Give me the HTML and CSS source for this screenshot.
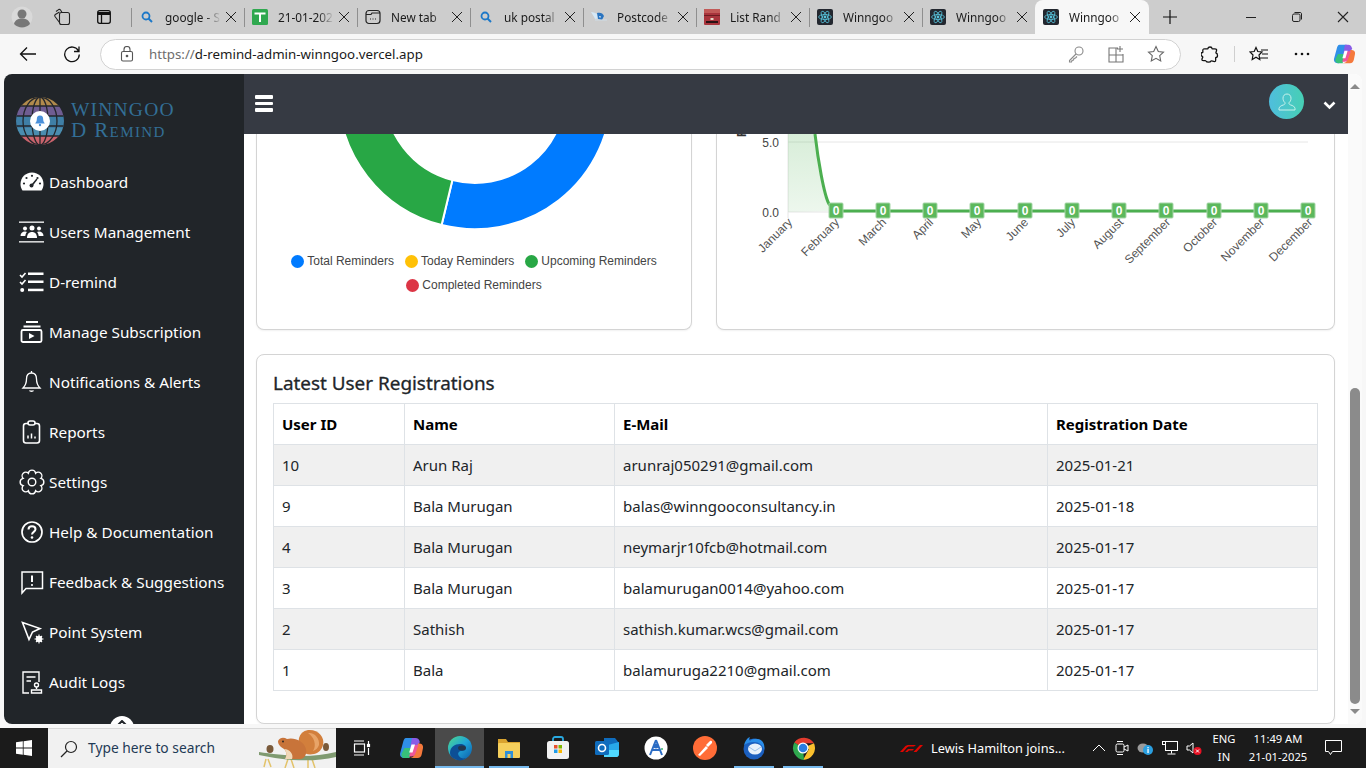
FILE: index.html
```html
<!DOCTYPE html>
<html lang="en">
<head>
    <meta charset="UTF-8">
    <meta name="viewport" content="width=device-width, initial-scale=1.0">
    <title>Winngoo D Remind</title>
    <link rel="stylesheet" href="styles.css">
</head>
<body>

    <!-- shared favicons -->
    <svg class="defs" width="0" height="0">
        <defs>
            <symbol id="fav-search" viewBox="0 0 16 16">
                <circle cx="7" cy="7" r="3.500" fill="none" stroke="#1c78c8" stroke-width="1.800"/>
                <path d="M9.500 9.500l3.500 3.500" stroke="#1c78c8" stroke-width="2"/>
            </symbol>
            <symbol id="fav-react" viewBox="0 0 16 16">
                <rect width="16" height="16" rx="2" fill="#23272f"/>
                <circle cx="8" cy="8" r="1.400" fill="#58c4dc"/>
                <g fill="none" stroke="#58c4dc" stroke-width=".8">
                    <ellipse cx="8" cy="8" rx="6.400" ry="2.500"/>
                    <ellipse cx="8" cy="8" rx="6.400" ry="2.500" transform="rotate(60 8 8)"/>
                    <ellipse cx="8" cy="8" rx="6.400" ry="2.500" transform="rotate(120 8 8)"/>
                </g>
            </symbol>
            <symbol id="copilot" viewBox="0 0 24 24">
                <path d="M7 2h8L11 17c-.6 2.500-2 5-5 5H5C2 22 .5 19.500 1.200 17L4 6.500C4.600 4 5.500 2 7 2z" fill="#2f8fe8"/>
                <path d="M13 2h3.500c2.500 0 3.800 1.500 4.300 4L18 13h-7z" fill="#8a5ce6"/>
                <path d="M10 22h8.500c2.500 0 3.800-1.500 4.300-4L24 12c.4-2.500-1-4.500-3.500-4.500H19L15 19c-.6 1.800-2 3-5 3z" fill="#f5793c"/>
                <path d="M5.500 12H13l-2.500 10H6c-3 0-4-2-3.300-4.500z" fill="#37c07a"/>
                <path d="M14 9h5.500l-3.300 9c-.6 1.500-1.800 2.500-3.500 2.500H10z" fill="#f0569a"/>
                <path d="M12.500 8.500H16l-2.500 8h-3.300z" fill="#fff"/>
            </symbol>
        </defs>
    </svg>

    <!-- Tab strip -->
    <div class="tabstrip">
        <div class="strip-left">
            <span class="profile">
                <svg width="22" height="22" viewBox="0 0 22 22">
                    <circle cx="11" cy="11" r="10.500" fill="#d9d9d9"/>
                    <circle cx="11" cy="8" r="4.500" fill="#777"/>
                    <path d="M3 18c1-4 4-5.500 8-5.500s7 1.500 8 5.500c-4 4.500-12 4.500-16 0z" fill="#777"/>
                </svg>
            </span>
            <span class="strip-btn">
                <svg width="18" height="18" viewBox="0 0 18 18" fill="none" stroke="#222" stroke-width="1.100">
                    <rect x="6.500" y="4.500" width="10" height="12" rx="2"/>
                    <path d="M6.500 14.500L2 8.500c-.5-.8-.4-1.500.3-2L6.500 4M9 4.500L7.500 2c-.5-.7-1.200-.8-1.900-.4L3 3.500"/>
                </svg>
            </span>
            <span class="strip-btn strip-btn-narrow">
                <svg width="16" height="16" viewBox="0 0 16 16" fill="none" stroke="#111" stroke-width="1.300">
                    <rect x="1.700" y="1.700" width="12.600" height="12.600" rx="2"/>
                    <path d="M2 4.500h12" stroke-width="3"/>
                    <path d="M5.500 4.500v9.500"/>
                </svg>
            </span>
        </div>

        <div class="tab">
            <svg class="fav" viewBox="0 0 16 16"><use href="#fav-search"/></svg>
            <span class="tab-title">google - S</span>
            <span class="tab-x"></span>
        </div>
        <div class="tab">
            <svg class="fav" viewBox="0 0 16 16">
                <rect width="16" height="16" rx="1.500" fill="#2fa84f"/>
                <path d="M2.500 4.500h11M8 4.500V13" stroke="#fff" stroke-width="2"/>
            </svg>
            <span class="tab-title">21-01-202</span>
            <span class="tab-x"></span>
        </div>
        <div class="tab">
            <svg class="fav" viewBox="0 0 16 16" fill="none" stroke="#222" stroke-width="1.200">
                <rect x="1" y="1.500" width="14" height="13" rx="3"/>
                <path d="M1 5.500h5l1-1.500h8M5 10h1M7.500 10h1M10 10h1"/>
            </svg>
            <span class="tab-title">New tab</span>
            <span class="tab-x"></span>
        </div>
        <div class="tab">
            <svg class="fav" viewBox="0 0 16 16"><use href="#fav-search"/></svg>
            <span class="tab-title">uk postal</span>
            <span class="tab-x"></span>
        </div>
        <div class="tab">
            <svg class="fav" viewBox="0 0 16 16">
                <path d="M0 3c4 0 7 2 9 6l-5 1C3 7 1 5 0 3z" fill="#d6e8f6"/>
                <path d="M6 4c3-1 6 0 7 3l-2 4-4-1z" fill="#2a74c0"/>
                <path d="M8 7l2 .5-1 1.500z" fill="#fff"/>
                <path d="M4 11h12" stroke="#d0dde8" stroke-width="1"/>
            </svg>
            <span class="tab-title">Postcode</span>
            <span class="tab-x"></span>
        </div>
        <div class="tab">
            <svg class="fav" viewBox="0 0 16 16">
                <rect width="16" height="16" rx="1" fill="#a8343c"/>
                <rect width="16" height="4" fill="#c25a58"/>
                <rect y="6" width="16" height="1" fill="#6e1d22"/>
                <rect x="2" y="12" width="12" height="2" fill="#2a1214"/>
                <rect x="6.500" y="9" width="3" height="2" fill="#e8d8c8"/>
            </svg>
            <span class="tab-title">List Rand</span>
            <span class="tab-x"></span>
        </div>
        <div class="tab">
            <svg class="fav" viewBox="0 0 16 16"><use href="#fav-react"/></svg>
            <span class="tab-title">Winngoo</span>
            <span class="tab-x"></span>
        </div>
        <div class="tab">
            <svg class="fav" viewBox="0 0 16 16"><use href="#fav-react"/></svg>
            <span class="tab-title">Winngoo</span>
            <span class="tab-x"></span>
        </div>
        <div class="tab tab-active">
            <svg class="fav" viewBox="0 0 16 16"><use href="#fav-react"/></svg>
            <span class="tab-title">Winngoo</span>
            <span class="tab-x"></span>
        </div>

        <span class="new-tab">
            <svg width="16" height="16" viewBox="0 0 16 16"><path d="M8 1v14M1 8h14" stroke="#111" stroke-width="1.200"/></svg>
        </span>

        <div class="window-btns">
            <span class="win-btn"><svg width="12" height="12" viewBox="0 0 12 12"><path d="M1 6.500h10" stroke="#222"/></svg></span>
            <span class="win-btn"><svg width="12" height="12" viewBox="0 0 12 12" fill="none" stroke="#222"><rect x="1.500" y="3" width="7.500" height="7.500" rx="1.500"/><path d="M3.500 1.500h5.500c1 0 1.500.5 1.500 1.500v5.500"/></svg></span>
            <span class="win-btn"><svg width="12" height="12" viewBox="0 0 12 12"><path d="M1 1l10 10M11 1L1 11" stroke="#222" stroke-width="1.100"/></svg></span>
        </div>
    </div>

    <!-- Address bar -->
    <div class="toolbar">
        <span class="tool-btn tool-back">
            <svg width="18" height="18" viewBox="0 0 18 18" fill="none" stroke="#111" stroke-width="1.300"><path d="M17 9H1.500M8 2.500L1.500 9 8 15.500"/></svg>
        </span>
        <span class="tool-btn tool-reload">
            <svg width="18" height="18" viewBox="0 0 18 18" fill="none" stroke="#111" stroke-width="1.300"><path d="M15.500 6A7.300 7.300 0 1 0 16.300 9.500M16 1.500V6.500H11"/></svg>
        </span>
        <div class="address">
            <svg class="lock" width="14" height="16" viewBox="0 0 14 16" fill="none" stroke="#555" stroke-width="1.100">
                <rect x="1.500" y="5.500" width="11" height="9.500" rx="1.500"/>
                <path d="M4 5.500V3.500a3 3 0 0 1 6 0v2"/>
                <circle cx="7" cy="10" r=".8" fill="#555"/>
            </svg>
            <span class="url"><span class="url-scheme">https://</span>d-remind-admin-winngoo.vercel.app</span>
            <span class="address-icons">
                <svg width="18" height="18" viewBox="0 0 18 18" fill="none" stroke="#8a8a8a" stroke-width="1.100"><circle cx="12" cy="6" r="4"/><path d="M9 9l-6.500 6.500v1.500h2l.5-1.500 1.500-.5.500-1.500 1.500-.5 1.500-1.500"/></svg>
                <svg width="18" height="18" viewBox="0 0 18 18" fill="none" stroke="#777" stroke-width="1.100"><path d="M11 3H2v14h14V9M2 10h14M9 3v14M13 1v6M10 4h6"/></svg>
                <svg width="18" height="18" viewBox="0 0 18 18" fill="none" stroke="#666" stroke-width="1.100"><path d="M9 1.500l2.300 5 5.200.6-3.800 3.600 1 5.300L9 13.300 4.300 16l1-5.300L1.500 7.100l5.200-.6z"/></svg>
            </span>
        </div>
        <span class="tool-btn tool-ext">
            <svg width="18" height="18" viewBox="0 0 18 18" fill="none" stroke="#111" stroke-width="1.300"><path d="M7 3.500C7 1.500 11 1.500 11 3.500c0 1 4-.5 4.500 1s-1 3-.5 3.500c2 .5 2 4.500 0 4.500-1 0 .5 3.500-1 4s-3-1-4-.5C9.500 17.500 5.500 17.500 5 16c-.2-1-3.500.5-4-1s1.500-3 .5-3.500C-.5 11-.5 7.500 1.500 7.500c1 0-.5-3 1-3.500S7 4.500 7 3.500z"/></svg>
        </span>
        <span class="tool-sep"></span>
        <span class="tool-btn tool-fav">
            <svg width="20" height="18" viewBox="0 0 20 18" fill="none" stroke="#111" stroke-width="1.200"><path d="M7 2.500l1.800 4 4.200.5-3 3 .8 4.500L7 12.300 3.200 14.500 4 10 1 7l4.200-.5zM12 5h7M13 9h6M11 13h8"/></svg>
        </span>
        <span class="tool-btn tool-more">
            <svg width="16" height="4" viewBox="0 0 16 4" fill="#111"><circle cx="2" cy="2" r="1.300"/><circle cx="8" cy="2" r="1.300"/><circle cx="14" cy="2" r="1.300"/></svg>
        </span>
        <span class="tool-btn tool-copilot">
            <svg width="22" height="22" viewBox="0 0 24 24"><use href="#copilot"/></svg>
        </span>
    </div>

    <!-- Page -->
    <div class="viewport">
        <aside class="sidebar">
            <div class="brand">
                <svg width="50" height="50" viewBox="0 0 50 50">
                    <clipPath id="globe"><circle cx="25" cy="25" r="24"/></clipPath>
                    <g clip-path="url(#globe)">
                        <rect width="50" height="10" fill="#b08a4c"/>
                        <rect y="10" width="50" height="10" fill="#6f5d92"/>
                        <rect y="20" width="50" height="12" fill="#3f7fa6"/>
                        <rect y="32" width="50" height="8" fill="#4a8daf"/>
                        <rect y="40" width="50" height="10" fill="#c9636c"/>
                        <g stroke="#24272c" stroke-width="1.300" fill="none">
                            <path d="M0 10h50M0 20h50M0 30h50M0 40h50"/>
                            <ellipse cx="25" cy="25" rx="8" ry="24"/>
                            <ellipse cx="25" cy="25" rx="17" ry="24"/>
                            <path d="M25 0v50"/>
                        </g>
                    </g>
                    <circle cx="25" cy="25" r="10" fill="#fff"/>
                    <g transform="translate(25 25) scale(.8) translate(-25 -25)">
                        <path d="M25 18c-3 0-4 2-4 5 0 3-1.500 4-2 5h12c-.5-1-2-2-2-5 0-3-1-5-4-5z" fill="#4a90d9"/>
                        <circle cx="25" cy="30" r="1.500" fill="#4a90d9"/>
                    </g>
                </svg>
                <div class="brand-text">
                    <span class="brand-top">WINNGOO</span>
                    <span class="brand-sub">D Remind</span>
                </div>
            </div>

            <nav class="nav">
                <a class="nav-item">
                    <svg viewBox="0 0 26 26" fill="#fff"><path d="M13 3.500C6.500 3.500 1.500 8.500 1.500 15c0 2.500.7 4.500 2 6.500h19c1.300-2 2-4 2-6.500C24.500 8.500 19.500 3.500 13 3.500z"/><g fill="#212529"><circle cx="13" cy="6.800" r="1.100"/><circle cx="7.500" cy="9" r="1.100"/><circle cx="18.500" cy="9" r="1.100"/><circle cx="5" cy="14.500" r="1.100"/><circle cx="21" cy="14.500" r="1.100"/><circle cx="12.500" cy="16.500" r="2"/></g><path d="M12 16l5.500-6.500 1 1L13.500 17z" fill="#212529"/></svg>
                    <span>Dashboard</span>
                </a>
                <a class="nav-item">
                    <svg viewBox="0 0 26 26" fill="#fff"><rect y="2.500" width="25" height="1.300"/><rect y="22.200" width="25" height="1.300"/><circle cx="13" cy="9" r="2.500"/><circle cx="6" cy="9.500" r="2"/><circle cx="20" cy="9.500" r="2"/><path d="M8 19c0-4 2-6 5-6s5 2 5 6z"/><path d="M1.500 17c0-3 2-4.500 4.500-4.500 1 0 1.500.2 2 .5-1 1-1.500 2.500-1.700 4zM24.500 17c0-3-2-4.500-4.500-4.500-1 0-1.500.2-2 .5 1 1 1.500 2.500 1.700 4z"/></svg>
                    <span>Users Management</span>
                </a>
                <a class="nav-item">
                    <svg viewBox="0 0 26 26" fill="#fff"><path d="M1 6l2 2 3.500-4" fill="none" stroke="#fff" stroke-width="1.600"/><path d="M1 13l2 2 3.500-4" fill="none" stroke="#fff" stroke-width="1.600"/><circle cx="3.200" cy="21" r="2"/><rect x="9" y="3.500" width="15.500" height="2.500"/><rect x="9" y="11.500" width="15.500" height="2.500"/><rect x="9" y="19.700" width="15.500" height="2.500"/></svg>
                    <span>D-remind</span>
                </a>
                <a class="nav-item">
                    <svg viewBox="0 0 26 26" fill="none" stroke="#fff" stroke-width="1.800"><path d="M7 3h12M4.500 7.500h17"/><rect x="2.500" y="11" width="20" height="12" rx="1.500"/><path d="M10 14v6l5.500-3z" fill="#fff" stroke="none"/></svg>
                    <span>Manage Subscription</span>
                </a>
                <a class="nav-item">
                    <svg viewBox="0 0 26 26" fill="none" stroke="#fff" stroke-width="1.300"><path d="M12.500 4c-3.500 0-5 2.500-5 6 0 5-1.500 7-3.500 9h17c-2-2-3.500-4-3.500-9 0-3.500-1.500-6-5-6z"/><path d="M12.500 2v2M10.500 21.500c.5 1 3.500 1 4 0"/></svg>
                    <span>Notifications &amp; Alerts</span>
                </a>
                <a class="nav-item">
                    <svg viewBox="0 0 26 26" fill="none" stroke="#fff" stroke-width="1.600"><rect x="4.500" y="4.500" width="16" height="19.500" rx="2.500"/><rect x="9" y="2" width="7" height="4" rx="2" fill="#212529"/><path d="M9 19.500v-3M12.500 19.500v-5M16 19.500v-2" stroke-width="1.500"/></svg>
                    <span>Reports</span>
                </a>
                <a class="nav-item">
                    <svg viewBox="0 0 26 26" fill="none" stroke="#fff" stroke-width="1.400"><circle cx="13" cy="13" r="3.800"/><path d="M21.800 9.400A3.650 3.650 0 0 1 21.800 16.600A3.650 3.650 0 0 1 16.600 21.800A3.650 3.650 0 0 1 9.400 21.800A3.650 3.650 0 0 1 4.200 16.600A3.650 3.650 0 0 1 4.200 9.400A3.650 3.650 0 0 1 9.400 4.200A3.650 3.650 0 0 1 16.600 4.200A3.650 3.650 0 0 1 21.800 9.400Z"/></svg>
                    <span>Settings</span>
                </a>
                <a class="nav-item">
                    <svg viewBox="0 0 26 26" fill="none" stroke="#fff" stroke-width="1.700"><circle cx="13" cy="13" r="10"/><path d="M9.500 10.500c0-2 1.500-3.200 3.500-3.200s3.500 1.200 3.500 3c0 2.700-3.500 2.500-3.500 5.200" stroke-width="2"/><circle cx="13" cy="18.500" r="1.300" fill="#fff" stroke="none"/></svg>
                    <span>Help &amp; Documentation</span>
                </a>
                <a class="nav-item">
                    <svg viewBox="0 0 26 26" fill="none" stroke="#fff" stroke-width="1.500"><path d="M3 3h20.500v16.500H7L3 24z"/><path d="M13 6.500v6.500" stroke-width="2"/><circle cx="13" cy="16" r="1.100" fill="#fff" stroke="none"/></svg>
                    <span>Feedback &amp; Suggestions</span>
                </a>
                <a class="nav-item">
                    <svg viewBox="0 0 26 26" fill="none" stroke="#fff" stroke-width="1.600"><path d="M3.500 3.500l17.500 6-7.500 3.500-3.500 7.500z"/><circle cx="20" cy="20" r="2.800" fill="#fff" stroke-width="1"/><circle cx="20" cy="20" r="1" fill="#212529" stroke="none"/><path d="M20 15.500v9M15.500 20h9M17 17l6 6M23 17l-6 6" stroke-width="1.100"/></svg>
                    <span>Point System</span>
                </a>
                <a class="nav-item">
                    <svg viewBox="0 0 26 26" fill="none" stroke="#fff" stroke-width="1.400"><path d="M10 24H4V3h16v10"/><path d="M7.500 8h9M7.500 12h4.500" stroke-width="1.600"/><circle cx="17.500" cy="16" r="2"/><path d="M17.500 18v2M12.500 21h10v3h-10z"/></svg>
                    <span>Audit Logs</span>
                </a>
            </nav>

            <span class="sidebar-toggle">
                <svg width="10" height="6" viewBox="0 0 10 6"><path d="M1 5l4-4 4 4" fill="none" stroke="#212529" stroke-width="2"/></svg>
            </span>
        </aside>

        <div class="page">
            <header class="topbar">
                <span class="hamburger"><i></i><i></i><i></i></span>
                <span class="avatar">
                    <svg width="22" height="22" viewBox="0 0 22 22" fill="none" stroke="#c9f2ec" stroke-width="1"><path d="M11 3c-2.500 0-4 1.800-4 4.200 0 2 .8 3.500 2 4.500.3 1-.2 1.700-1.500 2.200-2.500.8-4 1.500-4.500 3.600V19h16v-1.500c-.5-2.100-2-2.800-4.500-3.600-1.300-.5-1.800-1.200-1.500-2.200 1.200-1 2-2.500 2-4.500C15 4.800 13.500 3 11 3z"/></svg>
                </span>
                <svg class="caret" width="13" height="9" viewBox="0 0 13 9"><path d="M1.500 1.500l5 5 5-5" fill="none" stroke="#fff" stroke-width="2.600"/></svg>
            </header>

            <main class="content">
                <div class="chart-row">
                    <section class="card card-donut">
                        <svg class="donut" width="434" height="98" viewBox="257 134 434 98">
                            <path d="M441.600 225A136.500 136.500 0 0 0 611.500 92.600H565.500A90.500 90.500 0 0 1 452.400 180Z" fill="#007bff" stroke="#fff" stroke-width="2"/>
                            <path d="M441.600 225A136.500 136.500 0 0 1 338.500 92.600H384.500A90.500 90.500 0 0 0 452.400 180Z" fill="#28a745" stroke="#fff" stroke-width="2"/>
                        </svg>
                        <div class="legend">
                            <span class="legend-item"><i class="dot dot-blue"></i>Total Reminders</span>
                            <span class="legend-item"><i class="dot dot-yellow"></i>Today Reminders</span>
                            <span class="legend-item"><i class="dot dot-green"></i>Upcoming Reminders</span>
                            <span class="legend-item"><i class="dot dot-red"></i>Completed Reminders</span>
                        </div>
                    </section>

                    <section class="card card-line">
                        <svg class="line-chart" width="617" height="195" viewBox="717 134 617 195">
                            <defs>
                                <linearGradient id="area" x1="0" y1="0" x2="0" y2="1">
                                    <stop offset="0" stop-color="#4caf50" stop-opacity=".22"/>
                                    <stop offset="1" stop-color="#4caf50" stop-opacity=".1"/>
                                </linearGradient>
                            </defs>
                            <path d="M788 142H1308M788 212H1308M788 134V218" stroke="#e6e6e6" fill="none"/>
                            <path d="M788 134H815C818 160 824 195 829 204L836 211L788 212Z" fill="url(#area)"/>
                            <text class="axis-title" transform="translate(746 137) rotate(-90)">Reminders</text>
                            <text class="tick" x="779" y="147" text-anchor="end">5.0</text>
                            <text class="tick" x="779" y="217" text-anchor="end">0.0</text>
                            <path d="M815 134C818 160 824 195 829 204L836 211H1307" stroke="#4caf50" stroke-width="3" fill="none"/>

                            <g class="month-labels">
                                <text transform="translate(793 223) rotate(-45)">January</text>
                                <text transform="translate(840 223) rotate(-45)">February</text>
                                <text transform="translate(887 223) rotate(-45)">March</text>
                                <text transform="translate(934 223) rotate(-45)">April</text>
                                <text transform="translate(982 223) rotate(-45)">May</text>
                                <text transform="translate(1029 223) rotate(-45)">June</text>
                                <text transform="translate(1076 223) rotate(-45)">July</text>
                                <text transform="translate(1124 223) rotate(-45)">August</text>
                                <text transform="translate(1171 223) rotate(-45)">September</text>
                                <text transform="translate(1218 223) rotate(-45)">October</text>
                                <text transform="translate(1265 223) rotate(-45)">November</text>
                                <text transform="translate(1313 223) rotate(-45)">December</text>
                            </g>

                            <g class="zero-labels">
                                <rect x="829" y="203" width="14" height="15" rx="1"/><text x="836" y="215">0</text>
                                <rect x="876" y="203" width="14" height="15" rx="1"/><text x="883" y="215">0</text>
                                <rect x="923" y="203" width="14" height="15" rx="1"/><text x="930" y="215">0</text>
                                <rect x="970" y="203" width="14" height="15" rx="1"/><text x="977" y="215">0</text>
                                <rect x="1018" y="203" width="14" height="15" rx="1"/><text x="1025" y="215">0</text>
                                <rect x="1065" y="203" width="14" height="15" rx="1"/><text x="1072" y="215">0</text>
                                <rect x="1112" y="203" width="14" height="15" rx="1"/><text x="1119" y="215">0</text>
                                <rect x="1159" y="203" width="14" height="15" rx="1"/><text x="1166" y="215">0</text>
                                <rect x="1207" y="203" width="14" height="15" rx="1"/><text x="1214" y="215">0</text>
                                <rect x="1254" y="203" width="14" height="15" rx="1"/><text x="1261" y="215">0</text>
                                <rect x="1301" y="203" width="14" height="15" rx="1"/><text x="1308" y="215">0</text>
                            </g>
                        </svg>
                    </section>
                </div>

                <section class="card card-table">
                    <h3>Latest User Registrations</h3>
                    <table class="user-table">
                        <colgroup>
                            <col class="col-id"><col class="col-name"><col class="col-mail"><col class="col-date">
                        </colgroup>
                        <thead>
                            <tr><th>User ID</th><th>Name</th><th>E-Mail</th><th>Registration Date</th></tr>
                        </thead>
                        <tbody>
                            <tr><td>10</td><td>Arun Raj</td><td>arunraj050291@gmail.com</td><td>2025-01-21</td></tr>
                            <tr><td>9</td><td>Bala Murugan</td><td>balas@winngooconsultancy.in</td><td>2025-01-18</td></tr>
                            <tr><td>4</td><td>Bala Murugan</td><td>neymarjr10fcb@hotmail.com</td><td>2025-01-17</td></tr>
                            <tr><td>3</td><td>Bala Murugan</td><td>balamurugan0014@yahoo.com</td><td>2025-01-17</td></tr>
                            <tr><td>2</td><td>Sathish</td><td>sathish.kumar.wcs@gmail.com</td><td>2025-01-17</td></tr>
                            <tr><td>1</td><td>Bala</td><td>balamuruga2210@gmail.com</td><td>2025-01-17</td></tr>
                        </tbody>
                    </table>
                </section>
            </main>
        </div>

        <div class="scrollbar">
            <i class="arrow-up"></i>
            <div class="scroll-track"><div class="scroll-thumb"></div></div>
            <i class="arrow-down"></i>
        </div>
    </div>

    <!-- Windows taskbar -->
    <footer class="taskbar">
        <span class="start">
            <svg width="16" height="16" viewBox="0 0 16 16" fill="#fff"><path d="M0 2.300l6.800-1v6.300H0zM7.600 1.200L16 0v7.600H7.600zM0 8.400h6.800v6.300l-6.800-1zM7.600 8.400H16V16l-8.400-1.200z"/></svg>
        </span>
        <div class="search">
            <svg class="search-glass" width="18" height="18" viewBox="0 0 18 18" fill="none" stroke="#222" stroke-width="1.200"><circle cx="11" cy="7" r="5.500"/><path d="M7 11l-6 6"/></svg>
            <span class="search-text">Type here to search</span>
            <svg class="squirrel" width="78" height="40" viewBox="0 0 78 40">
                <path d="M8 30l-2 8M10 30l3 8M30 30l-3 9M33 30l3 9M50 30l0 9M54 30l3 9" stroke="#e3c36a" stroke-width="1.500"/>
                <path d="M1 23c20 3 50 7 77 0v5c-25 6-55 3-77-2z" fill="#7f9a70"/>
                <ellipse cx="12" cy="20" rx="3.500" ry="4" fill="#7a5a3a"/>
                <ellipse cx="68" cy="18" rx="3" ry="4" fill="#7a5a3a"/>
                <path d="M44 22C38 13 40 3 50 1C60 0 67 8 65 16C64 20 61 24 56 25C51 26 46 25 44 22Z" fill="#d27f3c"/>
                <path d="M50 4C56 3 62 9 61 16C60 19 58 21 55 22C59 16 56 8 50 4Z" fill="#e8a468"/>
                <path d="M20 12C22 8 26 8 29 10C36 8 46 12 48 20C49 25 47 29 43 30L27 30C30 26 28 22 26 20C23 18 20 16 20 12Z" fill="#c8743a"/>
                <path d="M26 20C30 24 28 28 27 30L34 30C36 26 32 20 26 20Z" fill="#f0d8b8"/>
                <circle cx="25" cy="12.500" r=".9" fill="#222"/>
            </svg>
        </div>

        <div class="task-icons">
            <span class="task-icon">
                <svg width="18" height="18" viewBox="0 0 18 18" fill="none" stroke="#fff" stroke-width="1.200"><path d="M1 2h10M1 16h10"/><rect x="1.500" y="5" width="10" height="8"/><path d="M15.500 2v3M15.500 9v7"/><rect x="14.500" y="5.500" width="2" height="2" fill="#fff"/></svg>
            </span>
            <span class="task-icon">
                <svg width="24" height="24" viewBox="0 0 24 24"><use href="#copilot"/></svg>
            </span>
            <span class="task-icon task-active">
                <svg width="26" height="26" viewBox="0 0 26 26">
                    <defs>
                        <linearGradient id="edge" x1="0" y1="0" x2="1" y2="1"><stop offset="0" stop-color="#4fd98a"/><stop offset=".5" stop-color="#1fa5d8"/><stop offset="1" stop-color="#0c5aa8"/></linearGradient>
                    </defs>
                    <circle cx="13" cy="13" r="12" fill="url(#edge)"/>
                    <path d="M3 18c0-6 5-9 10-9 4 0 6 2 6 4 0 2-2 3-4 3-3 0-5 2-3 5 1 2 4 3 7 2-3 3-8 3-11 1-3-1-5-3-5-6z" fill="#0c4f96"/>
                    <ellipse cx="15" cy="13" rx="4" ry="2.500" fill="#2c2c2c" opacity=".7"/>
                </svg>
            </span>
            <span class="task-icon task-open">
                <svg width="24" height="22" viewBox="0 0 24 22">
                    <path d="M1 2h8l2 3h12v4H1z" fill="#d9a32f"/>
                    <rect x="1" y="6" width="22" height="15" rx="1" fill="#f5cf5c"/>
                    <rect x="8" y="14" width="8" height="7" fill="#2f8fd8"/>
                    <rect x="10.500" y="17" width="3" height="4" fill="#f5cf5c"/>
                </svg>
            </span>
            <span class="task-icon">
                <svg width="24" height="24" viewBox="0 0 24 24">
                    <path d="M7 6V3c0-1 1-2 2-2h6c1 0 2 1 2 2v3" fill="none" stroke="#29a9e0" stroke-width="1.800"/>
                    <rect x="1" y="5" width="22" height="18" rx="2.500" fill="#f2f2f2"/>
                    <rect x="8" y="9" width="3.500" height="3.500" fill="#e8512e"/><rect x="12.500" y="9" width="3.500" height="3.500" fill="#7fb800"/>
                    <rect x="8" y="13.500" width="3.500" height="3.500" fill="#1f9be8"/><rect x="12.500" y="13.500" width="3.500" height="3.500" fill="#fbb800"/>
                </svg>
            </span>
            <span class="task-icon">
                <svg width="24" height="24" viewBox="0 0 24 24">
                    <path d="M9 2h11l4 5v11c0 1-1 2-2 2H9z" fill="#0f6cbd"/>
                    <path d="M9 10l15-4v12c0 1-1 2-2 2H9z" fill="#28a8ea"/>
                    <path d="M9 14h15v4c0 1-1 3-2 3H9z" fill="#50d9ff"/>
                    <rect y="5" width="14" height="14" rx="1.500" fill="#0f6cbd"/>
                    <circle cx="7" cy="12" r="3.500" fill="none" stroke="#fff" stroke-width="1.600"/>
                </svg>
            </span>
            <span class="task-icon">
                <svg width="24" height="24" viewBox="0 0 24 24">
                    <circle cx="12" cy="12" r="11.500" fill="#fff"/>
                    <path d="M12 4l-6 15M12 4l6 15M8 14h8" fill="none" stroke="#2b6cc4" stroke-width="2"/>
                    <circle cx="12" cy="10" r="2.500" fill="#2b6cc4"/>
                    <circle cx="18" cy="13" r="1" fill="#3bb56c"/>
                </svg>
            </span>
            <span class="task-icon">
                <svg width="24" height="24" viewBox="0 0 24 24">
                    <circle cx="12" cy="12" r="12" fill="#ff6c37"/>
                    <path d="M5 19l8-9 2 2-8 8zM13 9l4-4c1.500-.5 2.500.5 2 2l-4 4z" fill="#fff"/>
                </svg>
            </span>
            <span class="task-icon task-open">
                <svg width="24" height="24" viewBox="0 0 24 24">
                    <circle cx="12" cy="13" r="10.500" fill="#1b5fbf"/>
                    <path d="M2 9c1-4 3-7 6-8-1 2-1 3 0 4 3-3 9-3 12 0 2 2 3 6 2 9-1-5-5-8-10-8-4 0-7 1-10 3z" fill="#2a8de8"/>
                    <ellipse cx="13" cy="13" rx="7" ry="5.500" fill="#e8f1fb"/>
                    <path d="M7 11l6 4 6-4" fill="none" stroke="#9cc2ea" stroke-width="1"/>
                </svg>
            </span>
            <span class="task-icon task-open">
                <svg width="24" height="24" viewBox="0 0 24 24">
                    <path d="M12 12L3.300 6.500A12 12 0 0 1 23 7.200H12z" fill="#e33b2e"/>
                    <path d="M12 12L23 7.200A12 12 0 0 1 12 24l6-11z" fill="#fbc02d"/>
                    <path d="M12 12l1 12A12 12 0 0 1 3.300 6.500z" fill="#2fa84f"/>
                    <circle cx="12" cy="12" r="5.500" fill="#fff"/>
                    <circle cx="12" cy="12" r="4.300" fill="#2a7de1"/>
                </svg>
            </span>
        </div>

        <div class="news">
            <svg width="23" height="7" viewBox="0 0 23 7" fill="#e10600"><path d="M0 7L5 1.500C6 .5 7 0 9 0h7l-2 1.500H9.500C8 1.500 7.500 2 6.500 3L3 7zM5 7l3-3h6l-1.500 1.500H9L7.500 7zM13.500 7L20 0h3l-6.500 7z"/></svg>
            <span>Lewis Hamilton joins...</span>
        </div>

        <div class="tray">
            <svg width="14" height="8" viewBox="0 0 14 8"><path d="M1 7l6-6 6 6" fill="none" stroke="#fff"/></svg>
            <svg width="14" height="16" viewBox="0 0 14 16" fill="none" stroke="#fff"><rect x="1" y="4" width="8" height="8" rx="1.500"/><path d="M9 7l4-2v6l-4-2M2 1.500h6M2 14.500h6"/></svg>
            <svg width="16" height="14" viewBox="0 0 16 14"><ellipse cx="6" cy="7" rx="5.500" ry="4.500" fill="#9a9a9a"/><circle cx="11" cy="9" r="5" fill="#2a9fe0"/><rect x="10.400" y="8" width="1.300" height="4" fill="#fff"/><rect x="10.400" y="6" width="1.300" height="1.300" fill="#fff"/></svg>
            <svg width="16" height="14" viewBox="0 0 16 14" fill="none" stroke="#fff"><rect x="3.500" y=".5" width="12" height="9"/><rect x=".5" y=".5" width="3" height="3" fill="#1b1b1b"/><path d="M9.500 9.500v3M5.500 13h8"/></svg>
            <svg width="16" height="14" viewBox="0 0 16 14"><path d="M1 5h2.500L7 2v10L3.500 9H1z" fill="none" stroke="#fff"/><circle cx="11.500" cy="10" r="4" fill="#e81123"/><path d="M10 8.500l3 3M13 8.500l-3 3" stroke="#fff"/></svg>
        </div>
        <div class="lang"><span>ENG</span><span>IN</span></div>
        <div class="clock"><span>11:49 AM</span><span>21-01-2025</span></div>
        <span class="notify">
            <svg width="17" height="16" viewBox="0 0 17 16" fill="none" stroke="#fff"><path d="M.5.500h16v11h-3l-2 3-2-3H.5z" transform="matrix(-1 0 0 1 17 0)"/></svg>
        </span>
    </footer>

</body>
</html>
```

FILE: styles.css
```css
/* Browser frame */
* {
    box-sizing: border-box;
}

html, body {
    height: 100%;
}

body {
    margin: 0;
    height: 768px;
    overflow: hidden;
    display: flex;
    flex-direction: column;
    font-family: 'Noto Sans', sans-serif;
    background: #f7f7f7;
    color: #212529;
}

.defs {
    position: absolute;
}

.tabstrip {
    height: 34px;
    flex: none;
    display: flex;
    background: #cdcdcd;
}

.strip-left {
    width: 131px;
    flex: none;
    display: flex;
    align-items: center;
    padding-left: 11px;
}

.profile {
    width: 22px;
    height: 22px;
}

.strip-btn {
    width: 18px;
    height: 18px;
    margin-left: 20px;
}

.strip-btn-narrow {
    width: 16px;
    margin-left: 25px;
}

.tab {
    position: relative;
    width: 113px;
    flex: none;
    display: flex;
    align-items: center;
    padding-left: 8px;
    font-size: 11.800px;
    color: #1a1a1a;
}

/* short divider between tabs */
.tab::before {
    content: "";
    position: absolute;
    left: 0;
    top: 8px;
    width: 1px;
    height: 19px;
    background: #8f8f8f;
}

.fav {
    width: 16px;
    height: 16px;
    flex: none;
}

.tab-title {
    width: 56px;
    margin-left: 10px;
    overflow: hidden;
    white-space: nowrap;
    -webkit-mask-image: linear-gradient(to right, #000 72%, transparent 100%);
    mask-image: linear-gradient(to right, #000 72%, transparent 100%);
}

.tab-x {
    width: 10px;
    height: 10px;
    margin-left: 5px;
    flex: none;
    background:
        linear-gradient(45deg, transparent 46%, #222 46%, #222 54%, transparent 54%),
        linear-gradient(-45deg, transparent 46%, #222 46%, #222 54%, transparent 54%);
}

.tab-active {
    width: 114px;
    background: #f7f7f7;
    border-radius: 8px 8px 0 0;
}

.tab-active::before {
    display: none;
}

.new-tab {
    width: 42px;
    flex: none;
    display: flex;
    align-items: center;
    justify-content: center;
}

.window-btns {
    margin-left: auto;
    display: flex;
    align-items: center;
}

.win-btn {
    width: 46px;
    display: flex;
    justify-content: center;
}

/* Address row */
.toolbar {
    height: 40px;
    flex: none;
    display: flex;
    align-items: center;
    background: #f7f7f7;
}

.tool-btn {
    display: flex;
    align-items: center;
    justify-content: center;
    flex: none;
}

.tool-back {
    width: 18px;
    margin-left: 19px;
}

.tool-reload {
    width: 18px;
    margin-left: 26px;
}

.address {
    width: 1081px;
    height: 31px;
    margin-left: 19px;
    flex: none;
    display: flex;
    align-items: center;
    padding-left: 19px;
    background: #fff;
    border: 1px solid #d2d2d2;
    border-radius: 16px;
}

.url {
    margin-left: 15px;
    font-size: 13.300px;
    color: #1a1a1a;
}

.url-scheme {
    color: #6d6d6d;
}

.address-icons {
    margin-left: auto;
    display: flex;
    gap: 22px;
    padding-right: 15px;
}

.tool-ext {
    width: 18px;
    margin-left: 20px;
}

.tool-sep {
    width: 1px;
    height: 16px;
    margin-left: 15px;
    flex: none;
    background: #cfcfcf;
}

.tool-fav {
    width: 20px;
    margin-left: 14px;
}

.tool-more {
    width: 16px;
    margin-left: 25px;
}

.tool-copilot {
    width: 22px;
    margin-left: 23px;
}

/* Page area */
.viewport {
    height: 650px;
    flex: none;
    display: flex;
    margin: 0 4px;
    background: #fff;
    border-radius: 8px;
    overflow: hidden;
}

.sidebar {
    position: relative;
    width: 240px;
    flex: none;
    background: #212529;
    overflow: hidden;
}

.brand {
    height: 83px;
    display: flex;
    align-items: center;
    padding: 11px 0 0 11px;
    gap: 6px;
}

.brand-text {
    display: flex;
    flex-direction: column;
    margin-top: -2px;
    font-family: 'Liberation Serif', serif;
    color: #336f96;
}

.brand-top {
    font-size: 19.500px;
    letter-spacing: 1.200px;
    line-height: 20px;
}

.brand-sub {
    font-size: 21px;
    font-variant: small-caps;
    letter-spacing: 1.400px;
    line-height: 20px;
}

.nav-item {
    height: 50px;
    display: flex;
    align-items: center;
    gap: 4px;
    padding-left: 15px;
    color: #fff;
    font-size: 15.300px;
}

.nav-item span {
    padding-bottom: 1px;
}

.nav-item svg {
    width: 26px;
    height: 26px;
    flex: none;
}

.sidebar-toggle {
    position: absolute;
    left: 106px;
    top: 642px;
    width: 24px;
    height: 24px;
    display: flex;
    justify-content: center;
    padding-top: 4px;
    background: #fff;
    border-radius: 50%;
}

.page {
    flex: 1;
    min-width: 0;
    display: flex;
    flex-direction: column;
}

.topbar {
    height: 60px;
    flex: none;
    display: flex;
    align-items: center;
    padding: 0 12px 0 11px;
    background: #363a43;
}

.hamburger {
    width: 18px;
    display: flex;
    flex-direction: column;
    gap: 3px;
    margin-top: -1px;
}

.hamburger i {
    height: 3.500px;
    background: #fff;
    border-radius: 1px;
}

.avatar {
    width: 35px;
    height: 35px;
    margin-left: auto;
    margin-top: -5px;
    display: flex;
    align-items: center;
    justify-content: center;
    background: linear-gradient(90deg, #4fbedd, #47cfb4);
    border-radius: 50%;
}

.caret {
    margin-left: 19px;
    margin-top: 2px;
}

.content {
    flex: 1;
    overflow: hidden;
    padding: 0 13px 0 12px;
}

.chart-row {
    display: flex;
    gap: 24px;
    margin-bottom: 24px;
}

.card {
    background: #fff;
    border: 1px solid #d4d4d4;
    border-radius: 8px;
    box-shadow: 0 1px 2px rgba(0, 0, 0, 0.06);
}

.card-donut, .card-line {
    height: 196px;
    border-top: 0;
    border-radius: 0 0 8px 8px;
}

.card-donut {
    width: 436px;
}

.card-line {
    width: 619px;
}

.donut, .line-chart {
    display: block;
}

.legend {
    display: flex;
    flex-wrap: wrap;
    justify-content: center;
    column-gap: 11px;
    padding: 17px 30px 0;
    font-family: 'Liberation Sans', sans-serif;
    font-size: 12px;
    color: #444;
}

.legend-item {
    height: 24px;
    display: flex;
    align-items: center;
    gap: 3px;
}

.dot {
    width: 13px;
    height: 13px;
    border-radius: 50%;
}

.dot-blue { background: #007bff; }
.dot-yellow { background: #ffc107; }
.dot-green { background: #28a745; }
.dot-red { background: #dc3545; }

.line-chart text {
    font-family: 'Liberation Sans', sans-serif;
    font-size: 12px;
}

.tick {
    fill: #444;
}

.line-chart .axis-title {
    font-weight: bold;
    fill: #333;
}

.month-labels text {
    fill: #555;
    text-anchor: end;
}

.zero-labels rect {
    fill: #5cb85c;
    stroke: #a5d6a7;
    stroke-width: 1;
}

.line-chart .zero-labels text {
    fill: #fff;
    font-weight: bold;
    text-anchor: middle;
}

.card-table {
    height: 370px;
    padding: 15px 16px 16px;
}

.card-table h3 {
    margin: 0 0 6px;
    font-size: 18.900px;
    line-height: 27px;
    font-weight: 400;
    -webkit-text-stroke: 0.3px #212529;
    color: #212529;
}

.user-table {
    width: 1044px;
    table-layout: fixed;
    border-collapse: collapse;
    font-size: 15px;
}

.col-id { width: 131px; }
.col-name { width: 210px; }
.col-mail { width: 433px; }
.col-date { width: 270px; }

.user-table th, .user-table td {
    height: 41px;
    padding: 0 8px 1px;
    text-align: left;
    border: 1px solid #dee2e6;
}

.user-table th {
    color: #000;
    font-weight: 700;
}

.user-table tbody tr:nth-child(odd) {
    background: #f0f0f0;
}

.scrollbar {
    width: 14px;
    flex: none;
    display: flex;
    flex-direction: column;
    align-items: center;
    background: #fafafa;
    padding: 10px 0;
}

.arrow-up, .arrow-down {
    width: 0;
    height: 0;
    flex: none;
    border-left: 5px solid transparent;
    border-right: 5px solid transparent;
}

.arrow-up {
    border-bottom: 5px solid #8a8a8a;
}

.arrow-down {
    border-top: 5px solid #8a8a8a;
}

.scroll-track {
    flex: 1;
    width: 100%;
    display: flex;
    justify-content: center;
    padding: 299px 0 5px;
}

.scroll-thumb {
    width: 10px;
    background: #8b8b8b;
    border-radius: 5px;
}

/* Taskbar */
.taskbar {
    height: 40px;
    margin-top: 4px;
    flex: none;
    display: flex;
    align-items: center;
    background: #1b1b1b;
    color: #fff;
}

.start {
    width: 48px;
    flex: none;
    display: flex;
    justify-content: center;
}

.search {
    width: 288px;
    height: 40px;
    flex: none;
    display: flex;
    align-items: center;
    padding-left: 12px;
    background: #f1f1f1;
    border-top: 1px solid #d8d8d8;
    overflow: hidden;
}

.search-glass {
    flex: none;
}

.search-text {
    margin-left: 10px;
    margin-top: -2px;
    font-size: 13.800px;
    white-space: nowrap;
    color: #1f3a56;
}

.squirrel {
    margin-left: auto;
    flex: none;
}

.task-icons {
    display: flex;
    height: 40px;
    flex: none;
    margin-left: 1px;
}

.task-icon {
    width: 49px;
    flex: none;
    display: flex;
    align-items: center;
    justify-content: center;
}

.task-active {
    background: #4a4a4a linear-gradient(#76b9ed, #76b9ed) center bottom / 100% 2px no-repeat;
}

.task-open {
    background: linear-gradient(#76b9ed, #76b9ed) center bottom / 40px 2px no-repeat;
}

.news {
    width: 168px;
    flex: none;
    display: flex;
    align-items: center;
    gap: 8px;
    margin-left: 73px;
    font-size: 12.800px;
    white-space: nowrap;
}

.tray {
    width: 110px;
    flex: none;
    display: flex;
    align-items: center;
    justify-content: space-between;
    margin-left: 24px;
}

.lang, .clock {
    flex: none;
    display: flex;
    flex-direction: column;
    align-items: center;
    font-size: 11.200px;
    line-height: 18px;
    white-space: nowrap;
}

.lang {
    width: 40px;
    margin-left: 2px;
}

.clock {
    width: 64px;
    margin-left: 2px;
}

.notify {
    flex: none;
    margin-left: 15px;
    line-height: 0;
}
```
